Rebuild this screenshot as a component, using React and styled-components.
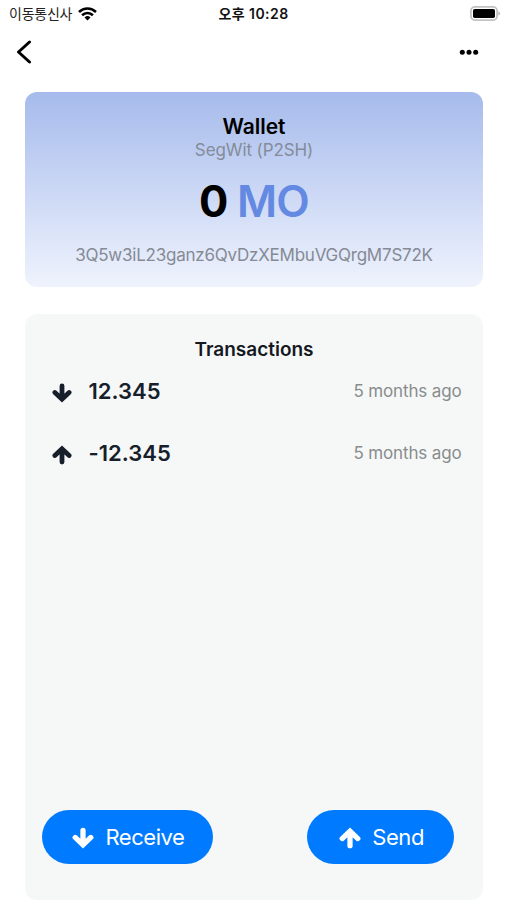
import React from "react";
import styled, { createGlobalStyle } from "styled-components";

const GlobalStyle = createGlobalStyle`
  * { box-sizing: border-box; }
  body { margin: 0; background: #fff; overflow: hidden; }
`;

const Screen = styled.div`
  width: 507px;
  height: 900px;
  display: flex;
  flex-direction: column;
  background: #fff;
  color: #000;
  font-family: Inter, "Noto Sans CJK KR", sans-serif;
`;

const StatusBar = styled.header`
  height: 28px;
  padding: 0 6px 0 9px;
  display: grid;
  grid-template-columns: 1fr auto 1fr;
  align-items: center;
  font-size: 14px;
  line-height: 20px;
`;

const Carrier = styled.div`
  display: flex;
  align-items: center;
  gap: 6px;
  color: #222;
  letter-spacing: -0.25px;
  white-space: nowrap;
`;

const Clock = styled.time`
  margin-right: 3px;
  font-size: 14px;
  font-weight: 600;
  letter-spacing: 0.45px;
  color: #111;
  white-space: nowrap;
`;

const Battery = styled.svg`
  justify-self: end;
  margin-top: -2px;
`;

const NavBar = styled.nav`
  height: 64px;
  padding: 12px 28px 0 16px;
  display: flex;
  justify-content: space-between;
  align-items: flex-start;
`;

const IconButton = styled.button`
  display: flex;
  padding: 0;
  border: 0;
  background: none;
  color: #000;
`;

const WalletCard = styled.section`
  height: 195px;
  flex: none;
  margin: 0 24.4px 0 25.4px;
  padding-top: 21px;
  border-radius: 12px;
  background: linear-gradient(#a6bbec, #eff3fd);
  display: flex;
  flex-direction: column;
  align-items: center;
`;

const WalletName = styled.h1`
  margin: 0;
  font-size: 21px;
  line-height: 28px;
  font-weight: 600;
  letter-spacing: -0.05px;
`;

const WalletType = styled.div`
  margin-top: -1px;
  font-size: 17px;
  line-height: 20px;
  letter-spacing: -0.1px;
  color: #858b99;
`;

const Balance = styled.div`
  margin-top: 15px;
  margin-bottom: 1px;
  font-size: 43.5px;
  line-height: 52px;
  font-weight: 700;
  letter-spacing: -0.8px;
`;

const Unit = styled.span`
  color: #6389e2;
  font-weight: 600;
`;

const Address = styled.div`
  margin-top: 17px;
  font-size: 17px;
  line-height: 20px;
  letter-spacing: -0.23px;
  color: #858a95;
  white-space: nowrap;
`;

const Panel = styled.main`
  flex: none;
  height: 586px;
  margin: 27px 24.4px 0 25.4px;
  padding: 22px 21px 36px;
  border-radius: 12px;
  background: #f6f8f8;
  display: flex;
  flex-direction: column;
`;

const PanelTitle = styled.h2`
  margin: 0 0 9px;
  font-size: 19px;
  line-height: 28px;
  font-weight: 600;
  text-align: center;
  color: #15191f;
`;

const Row = styled.div`
  height: 36px;
  margin: 0 0 26px 5.5px;
  display: flex;
  align-items: center;
  color: #17202a;
`;

const Amount = styled.div`
  flex: 1;
  margin-left: 16.5px;
  font-size: 22px;
  line-height: 30px;
  font-weight: 600;
  letter-spacing: 0.05px;
`;

const Age = styled.div`
  font-size: 17px;
  line-height: 24px;
  letter-spacing: -0.13px;
  color: #888c8d;
`;

const RowIcon = styled.svg`
  margin-top: 3px;
`;

const Actions = styled.footer`
  margin: auto 7.5px 0 -4.5px;
  display: flex;
  justify-content: space-between;
`;

const ActionButton = styled.button`
  width: ${(p) => p.$width}px;
  height: 54px;
  padding: 0 0 0 2px;
  border: 0;
  border-radius: 27px;
  background: #007aff;
  color: #fff;
  display: flex;
  align-items: center;
  justify-content: center;
  gap: 11px;
  font: 400 22px/30px Inter, sans-serif;
  letter-spacing: -0.45px;
`;

const ActionIcon = styled.svg`
  margin-top: 1px;
`;

function Arrow({ up, as: Svg, size, weight }) {
  return (
    <Svg width={size} height={size} viewBox="0 0 20 20" fill="none" stroke="currentColor" strokeWidth={weight} strokeLinecap="round">
      <g transform={up ? "rotate(180 10 10)" : undefined}>
        <path d="M10 3v12M2.9 9.5 10 16.2l7.1-6.7" />
      </g>
    </Svg>
  );
}

const transactions = [
  { amount: "12.345", age: "5 months ago", up: false },
  { amount: "-12.345", age: "5 months ago", up: true },
];

export default function App() {
  return (
    <Screen>
      <GlobalStyle />
      <StatusBar>
        <Carrier>
          이동통신사
          <svg width="19" height="14" viewBox="0 0 19 14">
            <g fill="none" stroke="#000" strokeWidth="2.6">
              <path d="M1 5a12.2 12.2 0 0 1 17 0" />
              <path d="M4.1 8.2a7.8 7.8 0 0 1 10.8 0" />
            </g>
            <path d="M6.5 10.5a4.4 4.4 0 0 1 6 0l-3 3z" />
          </svg>
        </Carrier>
        <Clock>오후 10:28</Clock>
        <Battery width="31" height="15" viewBox="0 0 31 15">
          <rect x="0.9" y="0.9" width="26.2" height="13.2" rx="4" fill="#fff" stroke="#c2c2c2" strokeWidth="1.8" />
          <rect x="3" y="3" width="22" height="9" rx="1.8" />
          <path d="M28.4 5.2c2.1.8 2.1 3.6 0 4.4z" fill="#b5b5b5" />
        </Battery>
      </StatusBar>
      <NavBar>
        <IconButton aria-label="Back">
          <svg width="17" height="24" viewBox="0 0 17 24" fill="none" stroke="currentColor" strokeWidth="3" strokeLinecap="round" strokeLinejoin="round">
            <path d="M13.5 2 2.5 12l11 10" />
          </svg>
        </IconButton>
        <IconButton aria-label="More">
          <svg width="20" height="24" viewBox="0 0 20 24" fill="currentColor">
            <circle cx="3.3" cy="12.2" r="2.5" />
            <circle cx="10" cy="12.2" r="2.5" />
            <circle cx="16.7" cy="12.2" r="2.5" />
          </svg>
        </IconButton>
      </NavBar>
      <WalletCard>
        <WalletName>Wallet</WalletName>
        <WalletType>SegWit (P2SH)</WalletType>
        <Balance>0 <Unit>MO</Unit></Balance>
        <Address>3Q5w3iL23ganz6QvDzXEMbuVGQrgM7S72K</Address>
      </WalletCard>
      <Panel>
        <PanelTitle>Transactions</PanelTitle>
        {transactions.map((t) => (
          <Row key={t.amount}>
            <Arrow as={RowIcon} up={t.up} size={20} weight={4.8} />
            <Amount>{t.amount}</Amount>
            <Age>{t.age}</Age>
          </Row>
        ))}
        <Actions>
          <ActionButton $width={171}>
            <Arrow as={ActionIcon} size={22} weight={4.8} />
            Receive
          </ActionButton>
          <ActionButton $width={147}>
            <Arrow as={ActionIcon} up size={22} weight={4.8} />
            Send
          </ActionButton>
        </Actions>
      </Panel>
    </Screen>
  );
}
